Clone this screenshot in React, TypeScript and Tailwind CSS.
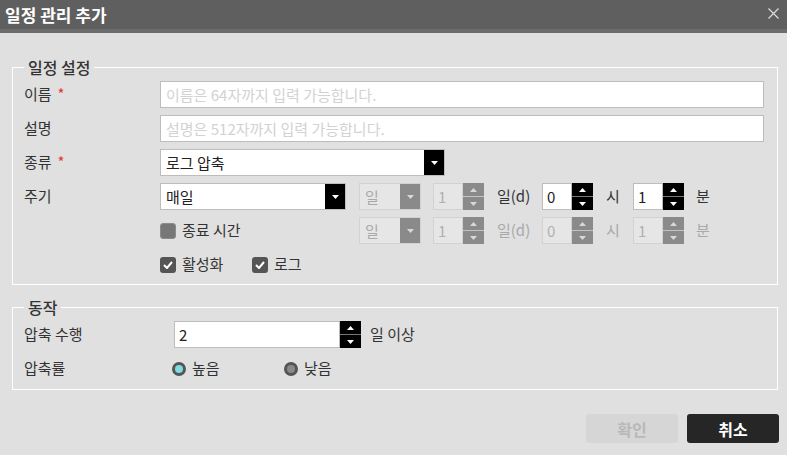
import React from 'react';

const font = "font-['Noto_Sans_CJK_KR','Noto_Sans',sans-serif]";

function Tri({ up, color }: { up?: boolean; color: string }) {
  return (
    <svg width="7" height="4" viewBox="0 0 7 4">
      <path d={up ? 'M0 4L3.5 0L7 4Z' : 'M0 0L7 0L3.5 4Z'} fill={color} />
    </svg>
  );
}

function Select({ value, w, disabled }: { value: string; w: string; disabled?: boolean }) {
  return (
    <div
      className={`flex h-[27px] ${w} border ${
        disabled ? 'border-[#d2d2d2] bg-[#e6e6e6] text-[#a9a9a9]' : 'border-[#bdbdbd] bg-white text-[#222]'
      }`}
    >
      <span className="flex-1 px-[5px] text-[15px] leading-[25px]">{value}</span>
      <span className={`flex w-[20px] items-center justify-center ${disabled ? 'bg-[#8a8a8a]' : 'bg-black'}`}>
        <Tri color={disabled ? '#d8d8d8' : '#fff'} />
      </span>
    </div>
  );
}

function Spin({ value, w, disabled }: { value: string; w: string; disabled?: boolean }) {
  return (
    <div className="flex h-[27px]">
      <div
        className={`${w} border px-[4px] text-[15px] leading-[25px] ${
          disabled ? 'border-[#d2d2d2] bg-[#e6e6e6] text-[#b0b0b0]' : 'border-[#bdbdbd] bg-white text-[#222]'
        }`}
      >
        {value}
      </div>
      <div className={`flex w-[21px] flex-col ${disabled ? 'bg-[#8a8a8a]' : 'bg-black'}`}>
        <span className="flex flex-1 items-center justify-center">
          <Tri up color={disabled ? '#d8d8d8' : '#fff'} />
        </span>
        <span className={`h-px ${disabled ? 'bg-[#c4c4c4]' : 'bg-[#777]'}`} />
        <span className="flex flex-1 items-center justify-center">
          <Tri color={disabled ? '#d8d8d8' : '#fff'} />
        </span>
      </div>
    </div>
  );
}

function Check({ checked }: { checked?: boolean }) {
  return (
    <span
      className={`flex h-[16px] w-[16px] shrink-0 items-center justify-center rounded-[3px] ${
        checked ? 'bg-[#555]' : 'border border-[#8c8c8c] bg-[#777]'
      }`}
    >
      {checked && (
        <svg width="10" height="8" viewBox="0 0 10 8">
          <path d="M1 4L4 7L9 1" stroke="#fff" strokeWidth="2" fill="none" />
        </svg>
      )}
    </span>
  );
}

function Radio({ on }: { on?: boolean }) {
  return (
    <span className="flex h-[14px] w-[14px] shrink-0 items-center justify-center rounded-full bg-[#555]">
      <span className={`h-[8px] w-[8px] rounded-full ${on ? 'bg-[#7fdbe2]' : 'bg-[#8a8a8a]'}`} />
    </span>
  );
}

function Input({ placeholder }: { placeholder: string }) {
  return (
    <div className="h-[27px] flex-1 border border-[#bdbdbd] bg-white px-[5px] text-[15px] leading-[25px] text-[#d2d2d2]">
      {placeholder}
    </div>
  );
}

const Req = () => <span className="ml-[6px] text-[#e53935]">*</span>;

export default function App() {
  return (
    <div className={`${font} flex min-h-[455px] w-[787px] flex-col bg-[#e0e0e0] text-[15px] text-[#333]`}>
      {/* title bar */}
      <div className="flex h-[33px] items-start border-b-[4px] border-[#6c6c6c] bg-[#5f5f5f]">
        <span className="ml-[5px] text-[17px] font-bold leading-[30px] text-white">일정 관리 추가</span>
        <svg className="ml-auto mr-[8px] mt-[8px]" width="11" height="11" viewBox="0 0 11 11">
          <path d="M0.5 0.5L10.5 10.5M10.5 0.5L0.5 10.5" stroke="#dcdcdc" strokeWidth="1.2" />
        </svg>
      </div>

      <fieldset className="ml-[12px] mr-[9px] mt-[24px] border border-white pb-[6px] pl-[11px] pr-[13px] pt-[4px]">
        <legend className="px-[4px] text-[16px] font-medium leading-[20px] text-[#333]">일정 설정</legend>
        <div className="flex flex-col gap-[7px]">
          <div className="flex h-[27px] items-center">
            <span className="w-[136px]">이름<Req /></span>
            <Input placeholder="이름은 64자까지 입력 가능합니다." />
          </div>
          <div className="flex h-[27px] items-center">
            <span className="w-[136px]">설명</span>
            <Input placeholder="설명은 512자까지 입력 가능합니다." />
          </div>
          <div className="flex h-[27px] items-center">
            <span className="w-[136px]">종류<Req /></span>
            <Select value="로그 압축" w="w-[285px]" />
          </div>
          <div className="flex h-[27px] items-center">
            <span className="w-[136px]">주기</span>
            <Select value="매일" w="w-[186px]" />
            <div className="ml-[13px]"><Select value="일" w="w-[62px]" disabled /></div>
            <div className="ml-[12px]"><Spin value="1" w="w-[30px]" disabled /></div>
            <span className="w-[58px] pl-[13px]">일(d)</span>
            <Spin value="0" w="w-[30px]" />
            <span className="w-[40px] pl-[13px]">시</span>
            <Spin value="1" w="w-[30px]" />
            <span className="ml-[12px]">분</span>
          </div>
          <div className="flex h-[27px] items-center">
            <span className="w-[136px]" />
            <span className="flex w-[199px] items-center gap-[6px]">
              <Check />
              종료 시간
            </span>
            <Select value="일" w="w-[62px]" disabled />
            <div className="ml-[12px]"><Spin value="1" w="w-[30px]" disabled /></div>
            <span className="w-[58px] pl-[13px] text-[#a9a9a9]">일(d)</span>
            <Spin value="0" w="w-[30px]" disabled />
            <span className="w-[40px] pl-[13px] text-[#a9a9a9]">시</span>
            <Spin value="1" w="w-[30px]" disabled />
            <span className="ml-[12px] text-[#a9a9a9]">분</span>
          </div>
          <div className="flex h-[27px] items-center">
            <span className="w-[136px]" />
            <span className="flex w-[92px] items-center gap-[6px]">
              <Check checked />
              활성화
            </span>
            <span className="flex items-center gap-[6px]">
              <Check checked />
              로그
            </span>
          </div>
        </div>
      </fieldset>

      <fieldset className="ml-[12px] mr-[9px] mt-[12px] border border-white pb-[7px] pl-[11px] pr-[13px] pt-[4px]">
        <legend className="px-[4px] text-[16px] font-medium leading-[20px] text-[#333]">동작</legend>
        <div className="flex flex-col gap-[7px]">
          <div className="flex h-[27px] items-center">
            <span className="w-[150px]">압축 수행</span>
            <Spin value="2" w="w-[166px]" />
            <span className="ml-[9px]">일 이상</span>
          </div>
          <div className="flex h-[27px] items-center">
            <span className="w-[148px]">압축률</span>
            <span className="flex w-[112px] items-center gap-[6px]">
              <Radio on />
              높음
            </span>
            <span className="flex items-center gap-[6px]">
              <Radio />
              낮음
            </span>
          </div>
        </div>
      </fieldset>

      <div className="mr-[8px] mt-[24px] flex justify-end gap-[9px]">
        <button className="h-[29px] w-[92px] rounded-[3px] bg-[#d6d6d6] text-[16px] font-bold text-[#b8b8b8]">확인</button>
        <button className="h-[29px] w-[92px] rounded-[3px] bg-[#262626] text-[16px] font-bold text-white">취소</button>
      </div>
    </div>
  );
}
